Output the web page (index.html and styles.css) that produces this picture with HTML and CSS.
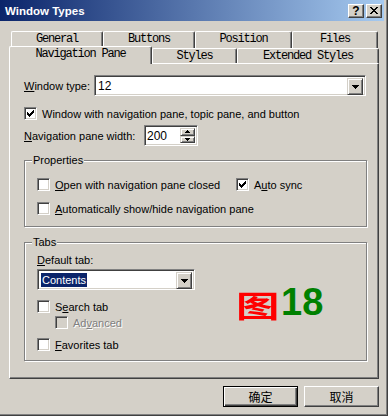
FILE: index.html
```html
<!DOCTYPE html>
<html>
    <head>
        <title>Window Types</title>
        <link rel="stylesheet" href="styles.css">
    </head>
    <body>
        <div class="window">
            <div class="frame">
                <div class="titlebar">
                    <span class="title">Window Types</span>
                    <div class="caption-btns">
                        <span class="cap-btn help">?</span>
                        <span class="cap-btn close">
                            <svg width="8" height="7" viewBox="0 0 8 7"><path d="M0 0h2v1h-2z M6 0h2v1h-2z M1 1h2v1h-2z M5 1h2v1h-2z M2 2h4v1h-4z M3 3h2v1h-2z M2 4h4v1h-4z M1 5h2v1h-2z M5 5h2v1h-2z M0 6h2v1h-2z M6 6h2v1h-2z" fill="#000"/></svg>
                        </span>
                    </div>
                </div>

                <div class="tabs">
                    <div class="tab-row back">
                        <div class="tab t-general">General</div>
                        <div class="tab t-buttons">Buttons</div>
                        <div class="tab t-position">Position</div>
                        <div class="tab t-files">Files</div>
                    </div>
                    <div class="tab-row front">
                        <div class="tab t-nav active">Navigation Pane</div>
                        <div class="tab t-styles">Styles</div>
                        <div class="tab t-ext">Extended Styles</div>
                    </div>
                </div>

                <div class="panel">
                    <div class="row r-type">
                        <span class="lbl lbl-type"><u>W</u>indow type:</span>
                        <div class="combo combo-type">
                            <span class="combo-text">12</span>
                            <span class="drop"><svg width="7" height="4" viewBox="0 0 7 4"><path d="M0 0h7v1h-7z M1 1h5v1h-5z M2 2h3v1h-3z M3 3h1v1h-1z" fill="#000"/></svg></span>
                        </div>
                    </div>

                    <div class="cb-row r-navpane">
                        <span class="box"><svg width="11" height="11" viewBox="0 0 11 11"><path d="M2 4h1v3h-1z M3 5h1v3h-1z M4 6h1v3h-1z M5 5h1v3h-1z M6 4h1v3h-1z M7 3h1v3h-1z M8 2h1v3h-1z" fill="#000"/></svg></span>
                        <span>Window with navigation pane, topic pane, and button</span>
                    </div>

                    <div class="row r-width">
                        <span class="lbl lbl-width"><u>N</u>avigation pane width:</span>
                        <div class="spin">
                            <span class="spin-text">200</span>
                            <span class="spin-btns">
                                <span class="sb sb-up"><svg width="5" height="3" viewBox="0 0 5 3"><path d="M2 0h1v1h-1z M1 1h3v1h-3z M0 2h5v1h-5z" fill="#000"/></svg></span>
                                <span class="sb sb-down"><svg width="5" height="3" viewBox="0 0 5 3"><path d="M0 0h5v1h-5z M1 1h3v1h-3z M2 2h1v1h-1z" fill="#000"/></svg></span>
                            </span>
                        </div>
                    </div>

                    <div class="group g-props">
                        <span class="legend">Properties</span>
                        <div class="cb-row">
                            <span class="cb-item open-item">
                                <span class="box"></span>
                                <span><u>O</u>pen with navigation pane closed</span>
                            </span>
                            <span class="cb-item">
                                <span class="box"><svg width="11" height="11" viewBox="0 0 11 11"><path d="M2 4h1v3h-1z M3 5h1v3h-1z M4 6h1v3h-1z M5 5h1v3h-1z M6 4h1v3h-1z M7 3h1v3h-1z M8 2h1v3h-1z" fill="#000"/></svg></span>
                                <span>A<u>u</u>to sync</span>
                            </span>
                        </div>
                        <div class="cb-row r-auto">
                            <span class="box"></span>
                            <span><u>A</u>utomatically show/hide navigation pane</span>
                        </div>
                    </div>

                    <div class="group g-tabs">
                        <span class="legend">Tabs</span>
                        <div class="lbl-default"><u>D</u>efault tab:</div>
                        <div class="combo combo-default">
                            <span class="combo-text"><span class="sel">Contents</span></span>
                            <span class="drop"><svg width="7" height="4" viewBox="0 0 7 4"><path d="M0 0h7v1h-7z M1 1h5v1h-5z M2 2h3v1h-3z M3 3h1v1h-1z" fill="#000"/></svg></span>
                        </div>
                        <div class="cb-row r-search">
                            <span class="box"></span>
                            <span>S<u>e</u>arch tab</span>
                        </div>
                        <div class="cb-row r-adv">
                            <span class="box disabled"></span>
                            <span class="disabled-text">Ad<u>v</u>anced</span>
                        </div>
                        <div class="cb-row r-fav">
                            <span class="box"></span>
                            <span><u>F</u>avorites tab</span>
                        </div>

                        <div class="fig"><span class="fig-cn">图</span><span class="fig-num">18</span></div>
                    </div>
                </div>

                <div class="buttons">
                    <span class="btn default">确定</span>
                    <span class="btn">取消</span>
                </div>
            </div>
        </div>
    </body>
</html>
```

FILE: styles.css
```css
body{
    margin: 0;
    font-family: "Liberation Sans", Arial, sans-serif;
    font-size: 11px;
    color: #000;
    background-color: #d4d0c8;
}

u{
    text-decoration: underline;
    text-underline-offset: 1px;
}

.window{
    width: 388px;
    height: 416px;
    box-sizing: border-box;
    background-color: #d4d0c8;
    border-right: 1px solid #404040;
    border-bottom: 1px solid #404040;
}

.frame{
    height: 100%;
    box-sizing: border-box;
    border-right: 1px solid #808080;
    border-bottom: 1px solid #808080;
    padding-right: 2px;
}

/* title bar */
.titlebar{
    height: 21px;
    display: flex;
    align-items: center;
    justify-content: space-between;
    padding: 0 2px 0 5px;
    background: linear-gradient(to right, #0a246a, #a6caf0);
}

.title{
    color: #fff;
    font-weight: bold;
    font-size: 11.5px;
}

.caption-btns{
    display: flex;
    gap: 2px;
}

.cap-btn{
    width: 16px;
    height: 14px;
    box-sizing: border-box;
    display: flex;
    align-items: center;
    justify-content: center;
    background-color: #d4d0c8;
    border: 1px solid;
    border-color: #fff #404040 #404040 #fff;
    box-shadow: inset -1px -1px 0 #808080;
}

.cap-btn.help{
    font-weight: bold;
    font-size: 12px;
    line-height: 12px;
}

/* tabs */
.tabs{
    margin: 10px 0 0 9px;
    width: 370px;
}

.tab-row{
    display: flex;
}

.tab-row.back{
    height: 17px;
    padding-left: 2px;
}

.tab-row.front{
    height: 17px;
    margin-top: -2px;
    align-items: flex-end;
}

.tab{
    box-sizing: border-box;
    height: 17px;
    background-color: #d4d0c8;
    border-top: 1px solid #fff;
    border-left: 1px solid #fff;
    border-right: 1px solid #404040;
    border-radius: 2px 2px 0 0;
    box-shadow: inset -1px 0 0 #808080;
    font-family: "Liberation Mono", "Courier New", monospace;
    font-size: 12px;
    letter-spacing: -1.2px;
    text-align: center;
    line-height: 15px;
}

.t-general{ width: 92px; }
.t-buttons{ width: 92px; }
.t-position{ width: 97px; }
.t-files{ width: 86px; }

.front .tab{
    height: 15px;
    line-height: 14px;
}

.t-nav{ width: 143px; }
.t-styles{ width: 85px; }
.t-ext{ width: 142px; }

.front .tab.active{
    height: 18px;
    margin-bottom: -1px;
    position: relative;
    z-index: 1;
    line-height: 14px;
}

/* page */
.panel{
    margin-left: 9px;
    width: 370px;
    height: 316px;
    box-sizing: border-box;
    border-top: 1px solid #fff;
    border-left: 1px solid #fff;
    border-right: 1px solid #404040;
    border-bottom: 1px solid #404040;
    box-shadow: inset -1px -1px 0 #808080;
    padding: 11px 0 0 14px;
}

.row{
    display: flex;
    align-items: center;
}

.lbl-type{ width: 70px; }
.lbl-width{ width: 120px; }

.combo, .spin{
    box-sizing: border-box;
    height: 21px;
    display: flex;
    background-color: #fff;
    border: 1px solid;
    border-color: #808080 #fff #fff #808080;
    box-shadow: inset 1px 1px 0 #404040, inset -1px -1px 0 #d4d0c8;
    padding: 2px;
}

.combo-type{ width: 272px; }
.combo-default{ width: 158px; }

.combo-text{
    flex: 1;
    line-height: 17px;
    padding-left: 1px;
    font-size: 12px;
}

.combo-default .combo-text{
    font-size: 11px;
}

.drop{
    width: 16px;
    height: 17px;
    box-sizing: border-box;
    display: flex;
    align-items: center;
    justify-content: center;
    background-color: #d4d0c8;
    border: 1px solid;
    border-color: #d4d0c8 #404040 #404040 #d4d0c8;
    box-shadow: inset 1px 1px 0 #fff, inset -1px -1px 0 #808080;
}

.drop svg{
    margin-left: 1px;
}

.sel{
    display: inline-block;
    background-color: #0a246a;
    color: #fff;
    line-height: 14px;
    padding: 0 1px;
    margin-top: 1px;
    vertical-align: top;
}

.r-type{ margin-bottom: 11px; }

.spin{
    width: 54px;
}

.spin-text{
    flex: 1;
    line-height: 17px;
    font-size: 12px;
}

.spin-btns{
    width: 15px;
    display: flex;
    flex-direction: column;
}

.sb{
    box-sizing: border-box;
    display: flex;
    align-items: center;
    justify-content: center;
    background-color: #d4d0c8;
    border: 1px solid;
    border-color: #d4d0c8 #404040 #404040 #d4d0c8;
    box-shadow: inset 1px 1px 0 #fff, inset -1px -1px 0 #808080;
}

.sb-up{ height: 9px; }
.sb-down{ height: 8px; }

.r-width{ margin-top: 5px; }

/* check boxes */
.cb-row{
    display: flex;
    align-items: center;
    height: 13px;
    gap: 5px;
}

.cb-item{
    display: flex;
    align-items: center;
    gap: 5px;
}

.open-item{ width: 194px; }

.box{
    width: 13px;
    height: 13px;
    box-sizing: border-box;
    flex: none;
    background-color: #fff;
    border: 1px solid;
    border-color: #808080 #fff #fff #808080;
    box-shadow: inset 1px 1px 0 #404040, inset -1px -1px 0 #d4d0c8;
}

.box svg{
    display: block;
}

.box.disabled{
    background-color: #d4d0c8;
}

.disabled-text{
    color: #808080;
    text-shadow: 1px 1px 0 #fff;
}

/* group boxes */
.group{
    position: relative;
    width: 343px;
    box-sizing: border-box;
    border: 1px solid #808080;
    box-shadow: 1px 1px 0 #fff, inset 1px 1px 0 #fff;
    padding-left: 12px;
}

.legend{
    position: absolute;
    left: 7px;
    top: -7px;
    padding: 0 1px;
    line-height: 13px;
    background-color: #d4d0c8;
}

.g-props{
    margin-top: 14px;
    height: 67px;
    padding-top: 17px;
}

.r-auto{ margin-top: 11px; }

.g-tabs{
    margin-top: 15px;
    height: 119px;
    padding-top: 11px;
}

.lbl-default{
    line-height: 13px;
    margin-bottom: 2px;
}

.r-search{ margin-top: 10px; }
.r-adv{ margin-top: 3px; margin-left: 18px; }
.r-fav{ margin-top: 9px; }

.fig{
    position: absolute;
    left: 211px;
    top: 42px;
    display: flex;
    align-items: flex-end;
    height: 34px;
}

.fig-cn{
    display: inline-block;
    width: 45px;
    color: #ff0000;
    font-family: "Noto Sans CJK SC", sans-serif;
    font-weight: bold;
    font-size: 31px;
    line-height: 30px;
    transform: scale(1.4, 0.95);
    transform-origin: left bottom;
}

.fig-num{
    color: #008000;
    font-family: "Liberation Sans", Arial, sans-serif;
    font-weight: bold;
    font-size: 38px;
    line-height: 34px;
}

/* dialog buttons */
.buttons{
    margin: 7px 0 0 9px;
    width: 370px;
    display: flex;
    justify-content: flex-end;
    gap: 6px;
}

.btn{
    width: 75px;
    height: 21px;
    box-sizing: border-box;
    display: flex;
    align-items: center;
    justify-content: center;
    font-family: "Noto Sans CJK SC", sans-serif;
    font-size: 12px;
    background-color: #d4d0c8;
    border: 1px solid;
    border-color: #fff #404040 #404040 #fff;
    box-shadow: inset -1px -1px 0 #808080;
}

.btn.default{
    border: 1px solid #000;
    box-shadow: inset 1px 1px 0 #fff, inset -1px -1px 0 #404040, inset -2px -2px 0 #808080;
}
```
